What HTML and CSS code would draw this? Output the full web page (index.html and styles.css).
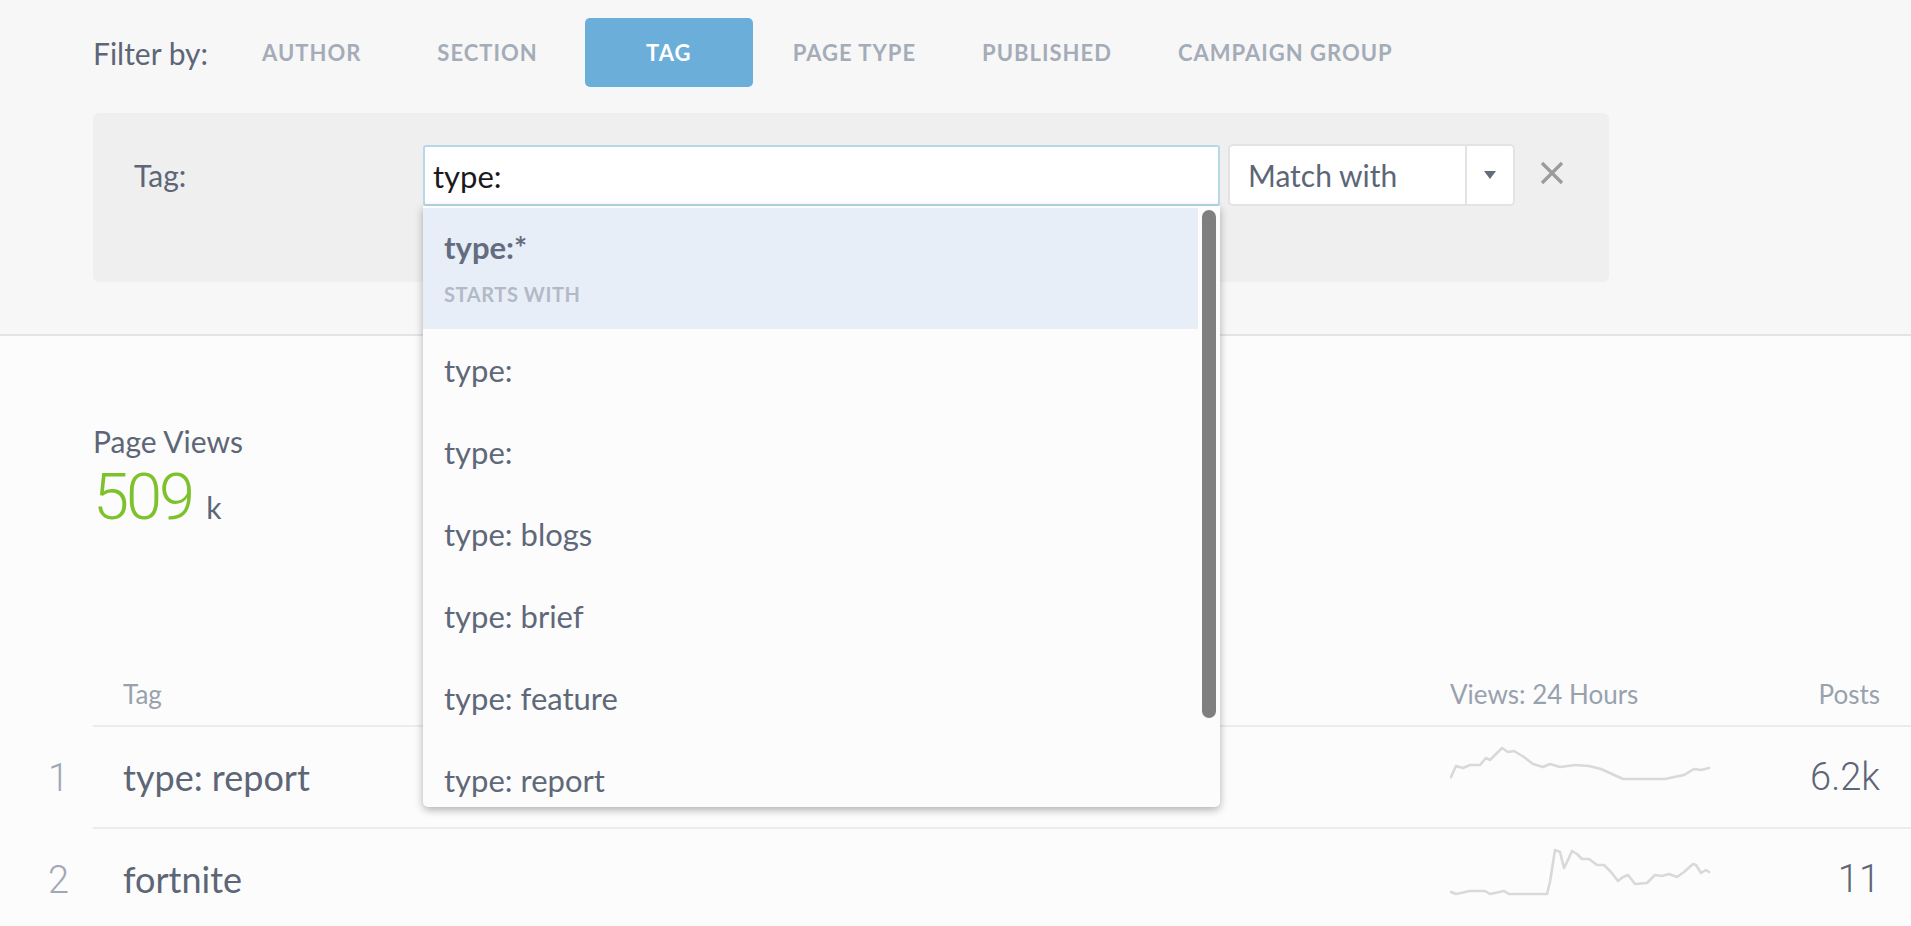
FILE: index.html
```html
<!DOCTYPE html>
<html lang="en">
  <head>
    <meta charset="UTF-8" />
    <meta name="viewport" content="width=device-width, initial-scale=1.0" />
    <title>Tags</title>

    <!-- CSS -->
    <link rel="stylesheet" href="styles.css">
  </head>
  <body>
    <div class="top">
      <div class="filterbar">
        <span class="filter-label">Filter by:</span>
        <a class="filter-item">Author</a>
        <a class="filter-item">Section</a>
        <a class="filter-item active">Tag</a>
        <a class="filter-item">Page Type</a>
        <a class="filter-item">Published</a>
        <a class="filter-item">Campaign Group</a>
      </div>

      <div class="panel">
        <label class="panel-label">Tag:</label>
        <div class="combo">
          <input type="text" class="tag-input" value="type:" />
          <div class="dropdown">
            <ul class="options">
              <li class="option selected">
                <span class="option-main">type:*</span>
                <span class="option-sub">Starts with</span>
              </li>
              <li class="option">type:</li>
              <li class="option">type:</li>
              <li class="option">type: blogs</li>
              <li class="option">type: brief</li>
              <li class="option">type: feature</li>
              <li class="option">type: report</li>
            </ul>
            <div class="scrollbar"></div>
          </div>
        </div>
        <div class="match">
          <span class="match-text">Match with</span>
          <span class="match-arrow"><i></i></span>
        </div>
        <svg class="remove" width="26" height="26" viewBox="0 0 26 26">
          <path d="M3 3 L23 23 M23 3 L3 23" stroke="#9b9b9b" stroke-width="3.2" fill="none" />
        </svg>
      </div>
    </div>

    <div class="main">
      <div class="stat">
        <div class="stat-label">Page Views</div>
        <div class="stat-value">509<span class="unit">k</span></div>
      </div>

      <div class="table">
        <div class="row head">
          <div class="rank"></div>
          <div class="cells">
            <div class="name">Tag</div>
            <div class="spark">Views: 24 Hours</div>
            <div class="posts">Posts</div>
          </div>
        </div>

        <div class="row">
          <div class="rank">1</div>
          <div class="cells">
            <div class="name">type: report</div>
            <div class="spark">
              <svg width="262" height="100" viewBox="0 0 262 100">
                <polyline points="1,50 6,39 13,41 20,38 30,38 36,31 40,33 52,21 58,25 64,24 74,30 83,37 93,40 100,37 110,40 125,38 139,39 151,42 173,52 185,52 215,52 224,50 234,48 244,42 251,43 259,41" />
              </svg>
            </div>
            <div class="posts">6.2k</div>
          </div>
        </div>

        <div class="row">
          <div class="rank">2</div>
          <div class="cells">
            <div class="name">fortnite</div>
            <div class="spark">
              <svg width="262" height="100" viewBox="0 0 262 100">
                <polyline points="1,63 6,65 20,62 35,62 40,65 54,62 59,65 97,65 100,53 105,21 110,23 114,39 117,33 122,22 127,25 132,30 139,30 147,36 154,36 161,43 168,52 173,48 178,46 185,55 197,54 205,46 212,47 219,45 227,48 234,43 243,35 246,36 251,44 256,41 259,43" />
              </svg>
            </div>
            <div class="posts">11</div>
          </div>
        </div>
      </div>
    </div>
  </body>
</html>
```

FILE: styles.css
```css
html {
  font-family: "Lato", sans-serif;
}

body {
  margin: 0;
  background-color: #fcfcfc;
  color: #5d6677;
}

.top {
  background-color: #f7f7f7;
  border-bottom: 2px solid #e4e4e4;
  padding: 18px 0 52px 93px;
}

.filterbar {
  display: flex;
  align-items: center;
  height: 69px;
}

.filter-label {
  font-size: 30px;
  margin-right: 19px;
}

.filter-item {
  font-size: 22px;
  font-weight: 700;
  letter-spacing: 1px;
  text-transform: uppercase;
  color: #a4acb7;
  padding: 0 35px;
  line-height: 69px;
}

.filter-item:nth-child(2) {
  margin-right: 6px;
}

.filter-item.active ~ .filter-item {
  padding: 0 33px;
}

.filter-item.active {
  background-color: #6aaed9;
  color: #fff;
  border-radius: 5px;
  width: 168px;
  box-sizing: border-box;
  text-align: center;
  padding: 0;
  margin: 0 7px 0 12px;
}

.panel {
  display: flex;
  align-items: flex-start;
  width: 1516px;
  height: 169px;
  box-sizing: border-box;
  margin-top: 26px;
  padding: 32px 0 0 41px;
  background-color: #efefef;
  border-radius: 6px;
}

.panel-label {
  width: 289px;
  font-size: 30px;
  line-height: 61px;
}

.combo {
  position: relative;
  width: 797px;
}

.tag-input {
  display: block;
  width: 100%;
  height: 61px;
  box-sizing: border-box;
  border: 2px solid #b7d8ea;
  border-radius: 3px;
  padding: 0 8px;
  font-family: "Lato", sans-serif;
  font-size: 31px;
  color: #1a1a1a;
  background-color: #fff;
  outline: none;
}

.dropdown {
  position: absolute;
  top: 100%;
  left: 0;
  right: 0;
  height: 601px;
  overflow: hidden;
  background-color: #fcfcfc;
  border-radius: 0 0 5px 5px;
  box-shadow: 0 3px 8px rgba(0, 0, 0, 0.3);
  padding-top: 2px;
  box-sizing: border-box;
  z-index: 5;
}

.options {
  list-style: none;
  margin: 0 22px 0 0;
  padding: 0;
}

.option {
  display: flex;
  align-items: center;
  height: 82px;
  padding-left: 21px;
  font-size: 31px;
  color: #5f6879;
}

.option.selected {
  flex-direction: column;
  align-items: flex-start;
  height: 121px;
  box-sizing: border-box;
  padding-top: 21px;
  background-color: #e7eef8;
}

.option-main {
  font-weight: 700;
  line-height: 36px;
  color: #646d7e;
}

.option-sub {
  margin-top: 18px;
  font-size: 20px;
  line-height: 22px;
  font-weight: 700;
  letter-spacing: 0.6px;
  text-transform: uppercase;
  color: #b3bac5;
}

.scrollbar {
  position: absolute;
  top: 4px;
  right: 4px;
  width: 14px;
  height: 508px;
  border-radius: 7px;
  background-color: #7f7f7f;
}

.match {
  display: flex;
  margin-left: 8px;
  margin-top: -1px;
  width: 287px;
  height: 62px;
  box-sizing: border-box;
  border: 2px solid #e3e3e3;
  border-radius: 5px;
  background-color: #fff;
}

.match-text {
  flex: 1;
  padding-left: 18px;
  font-size: 30px;
  line-height: 58px;
}

.match-arrow {
  display: flex;
  align-items: center;
  justify-content: center;
  width: 46px;
  border-left: 2px solid #e3e3e3;
}

.match-arrow i {
  border-left: 6px solid transparent;
  border-right: 6px solid transparent;
  border-top: 8px solid #636c7c;
}

.remove {
  margin: 15px 0 0 24px;
}

.stat {
  padding: 87px 0 0 93px;
}

.stat-label {
  font-size: 30px;
  line-height: 36px;
}

.stat-value {
  margin-top: 5px;
  font-family: "Roboto", sans-serif;
  font-weight: 300;
  font-size: 65px;
  line-height: 66px;
  letter-spacing: -3px;
  color: #7dc22a;
}

.unit {
  margin-left: 14px;
  font-family: "Lato", sans-serif;
  font-weight: 400;
  font-size: 30px;
  letter-spacing: 0;
  color: #5d6677;
}

.table {
  margin-top: 122px;
}

.row {
  display: flex;
}

.rank {
  width: 93px;
  box-sizing: border-box;
  padding-right: 24px;
  text-align: right;
  font-family: "Roboto", sans-serif;
  font-weight: 300;
  font-size: 38px;
  color: #a0a8b4;
  align-self: center;
}

.cells {
  flex: 1;
  display: flex;
  align-items: center;
  height: 102px;
  box-sizing: border-box;
  border-bottom: 2px solid #ececec;
}

.name {
  flex: 1;
  padding-left: 30px;
  font-size: 36px;
}

.spark {
  width: 262px;
  height: 100px;
}

.spark polyline {
  fill: none;
  stroke: #d9d9d9;
  stroke-width: 2.6;
  stroke-linejoin: round;
  stroke-linecap: round;
}

.posts {
  width: 199px;
  box-sizing: border-box;
  padding-right: 31px;
  text-align: right;
  font-family: "Roboto", sans-serif;
  font-weight: 300;
  font-size: 38px;
}

.head .cells {
  height: 65px;
}

.head .name,
.head .spark,
.head .posts {
  height: auto;
  font-family: "Lato", sans-serif;
  font-weight: 400;
  font-size: 26px;
  color: #98a2ae;
}
```
